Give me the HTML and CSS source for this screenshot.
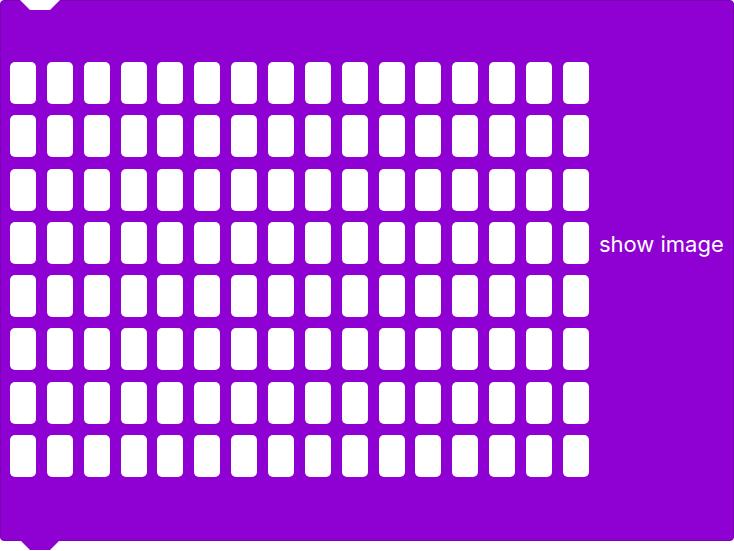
FILE: index.html
```html
<html>
    <head>
        <link rel="stylesheet" href="styles.css">
    </head>
    <body>
        <div class="block">
            <div class="matrix">
                <div class="led"></div><div class="led"></div><div class="led"></div><div class="led"></div><div class="led"></div><div class="led"></div><div class="led"></div><div class="led"></div><div class="led"></div><div class="led"></div><div class="led"></div><div class="led"></div><div class="led"></div><div class="led"></div><div class="led"></div><div class="led"></div>
                <div class="led"></div><div class="led"></div><div class="led"></div><div class="led"></div><div class="led"></div><div class="led"></div><div class="led"></div><div class="led"></div><div class="led"></div><div class="led"></div><div class="led"></div><div class="led"></div><div class="led"></div><div class="led"></div><div class="led"></div><div class="led"></div>
                <div class="led"></div><div class="led"></div><div class="led"></div><div class="led"></div><div class="led"></div><div class="led"></div><div class="led"></div><div class="led"></div><div class="led"></div><div class="led"></div><div class="led"></div><div class="led"></div><div class="led"></div><div class="led"></div><div class="led"></div><div class="led"></div>
                <div class="led"></div><div class="led"></div><div class="led"></div><div class="led"></div><div class="led"></div><div class="led"></div><div class="led"></div><div class="led"></div><div class="led"></div><div class="led"></div><div class="led"></div><div class="led"></div><div class="led"></div><div class="led"></div><div class="led"></div><div class="led"></div>
                <div class="led"></div><div class="led"></div><div class="led"></div><div class="led"></div><div class="led"></div><div class="led"></div><div class="led"></div><div class="led"></div><div class="led"></div><div class="led"></div><div class="led"></div><div class="led"></div><div class="led"></div><div class="led"></div><div class="led"></div><div class="led"></div>
                <div class="led"></div><div class="led"></div><div class="led"></div><div class="led"></div><div class="led"></div><div class="led"></div><div class="led"></div><div class="led"></div><div class="led"></div><div class="led"></div><div class="led"></div><div class="led"></div><div class="led"></div><div class="led"></div><div class="led"></div><div class="led"></div>
                <div class="led"></div><div class="led"></div><div class="led"></div><div class="led"></div><div class="led"></div><div class="led"></div><div class="led"></div><div class="led"></div><div class="led"></div><div class="led"></div><div class="led"></div><div class="led"></div><div class="led"></div><div class="led"></div><div class="led"></div><div class="led"></div>
                <div class="led"></div><div class="led"></div><div class="led"></div><div class="led"></div><div class="led"></div><div class="led"></div><div class="led"></div><div class="led"></div><div class="led"></div><div class="led"></div><div class="led"></div><div class="led"></div><div class="led"></div><div class="led"></div><div class="led"></div><div class="led"></div>
            </div>
            <span class="label">show image</span>
        </div>
    </body>
</html>
```

FILE: styles.css
```css
body {
    margin: 0;
    background: #fff;
    font-family: Inter, "Open Sans", sans-serif;
}
.block {
    position: relative;
    display: flex;
    align-items: flex-start;
    width: 734px;
    height: 541px;
    box-sizing: border-box;
    padding: 61px 0 0 9px;
    background: #8f00d3;
    border: 1px solid #7a00b4;
    border-radius: 4px;
}
/* notch at the top, tab at the bottom */
.block::before {
    content: "";
    position: absolute;
    top: -1px;
    left: 19px;
    width: 40px;
    height: 10px;
    background: #fff;
    clip-path: polygon(0 0, 100% 0, 75% 100%, 25% 100%);
}
.block::after {
    content: "";
    position: absolute;
    top: 100%;
    left: 19px;
    width: 40px;
    height: 10px;
    background: #8f00d3;
    clip-path: polygon(0 0, 100% 0, 75% 100%, 25% 100%);
}
.matrix {
    display: grid;
    grid-template-columns: repeat(16, 26px);
    grid-auto-rows: 42px;
    column-gap: 10.87px;
    row-gap: 11.3px;
}
.led {
    background: #fff;
    border-radius: 5px;
}
.label {
    margin: 169px 0 0 10px;
    color: #fff;
    font-size: 22px;
    line-height: 26px;
    white-space: nowrap;
}
```
